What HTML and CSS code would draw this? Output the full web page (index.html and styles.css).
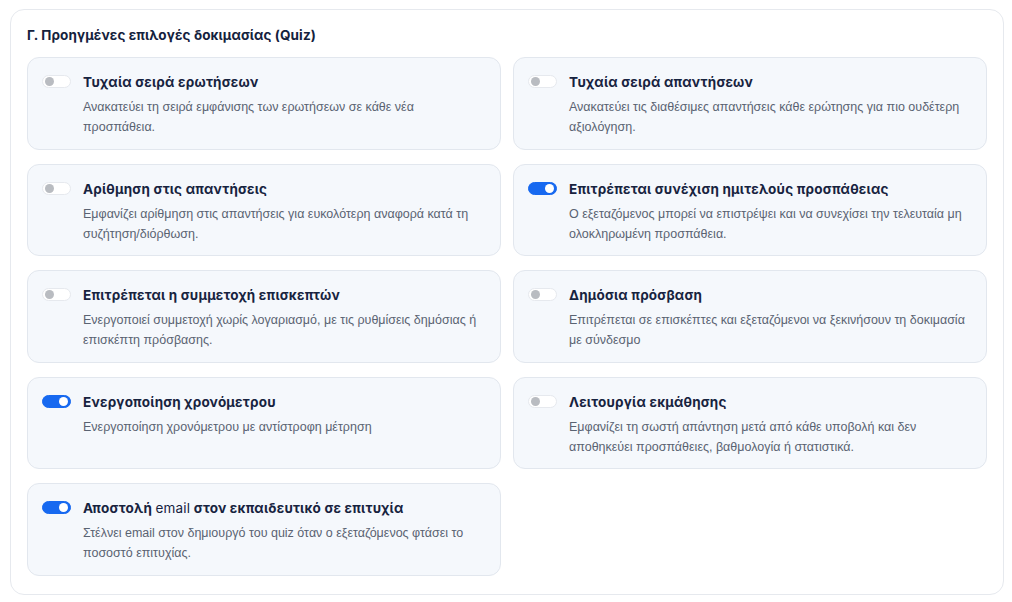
FILE: index.html
```html
<!DOCTYPE html>
<html lang="el">
<head>
<meta charset="utf-8">
<link rel="stylesheet" href="styles.css">
</head>
<body>
<section class="panel">
  <h2 class="heading">Γ. Προηγμένες επιλογές δοκιμασίας (Quiz)</h2>
  <div class="grid">
    <div class="card">
      <span class="toggle"></span>
      <div class="text">
        <div class="title">Τυχαία σειρά ερωτήσεων</div>
        <div class="desc">Ανακατεύει τη σειρά εμφάνισης των ερωτήσεων σε κάθε νέα προσπάθεια.</div>
      </div>
    </div>
    <div class="card">
      <span class="toggle"></span>
      <div class="text">
        <div class="title">Τυχαία σειρά απαντήσεων</div>
        <div class="desc">Ανακατεύει τις διαθέσιμες απαντήσεις κάθε ερώτησης για πιο ουδέτερη αξιολόγηση.</div>
      </div>
    </div>
    <div class="card">
      <span class="toggle"></span>
      <div class="text">
        <div class="title">Αρίθμηση στις απαντήσεις</div>
        <div class="desc">Εμφανίζει αρίθμηση στις απαντήσεις για ευκολότερη αναφορά κατά τη συζήτηση/διόρθωση.</div>
      </div>
    </div>
    <div class="card">
      <span class="toggle on"></span>
      <div class="text">
        <div class="title">Επιτρέπεται συνέχιση ημιτελούς προσπάθειας</div>
        <div class="desc">Ο εξεταζόμενος μπορεί να επιστρέψει και να συνεχίσει την τελευταία μη ολοκληρωμένη προσπάθεια.</div>
      </div>
    </div>
    <div class="card">
      <span class="toggle"></span>
      <div class="text">
        <div class="title">Επιτρέπεται η συμμετοχή επισκεπτών</div>
        <div class="desc">Ενεργοποιεί συμμετοχή χωρίς λογαριασμό, με τις ρυθμίσεις δημόσιας ή επισκέπτη πρόσβασης.</div>
      </div>
    </div>
    <div class="card">
      <span class="toggle"></span>
      <div class="text">
        <div class="title">Δημόσια πρόσβαση</div>
        <div class="desc">Επιτρέπεται σε επισκέπτες και εξεταζόμενοι να ξεκινήσουν τη δοκιμασία με σύνδεσμο</div>
      </div>
    </div>
    <div class="card">
      <span class="toggle on"></span>
      <div class="text">
        <div class="title">Ενεργοποίηση χρονόμετρου</div>
        <div class="desc">Ενεργοποίηση χρονόμετρου με αντίστροφη μέτρηση</div>
      </div>
    </div>
    <div class="card">
      <span class="toggle"></span>
      <div class="text">
        <div class="title">Λειτουργία εκμάθησης</div>
        <div class="desc">Εμφανίζει τη σωστή απάντηση μετά από κάθε υποβολή και δεν αποθηκεύει προσπάθειες, βαθμολογία ή στατιστικά.</div>
      </div>
    </div>
    <div class="card">
      <span class="toggle on"></span>
      <div class="text">
        <div class="title">Αποστολή <span class="latin">email</span> στον εκπαιδευτικό σε επιτυχία</div>
        <div class="desc">Στέλνει email στον δημιουργό του quiz όταν ο εξεταζόμενος φτάσει το ποσοστό επιτυχίας.</div>
      </div>
    </div>
  </div>
</section>
</body>
</html>
```

FILE: styles.css
```css
html, body {
  margin: 0;
  padding: 0;
  background: #ffffff;
}
body {
  padding: 9px 8px 8px 10px;
  font-family: "Liberation Sans", Arial, sans-serif;
}
.panel {
  box-sizing: border-box;
  width: 994px;
  height: 586px;
  border: 1px solid #e6e9ee;
  border-radius: 14px;
  padding: 15px 16px 16px 16px;
  background: #ffffff;
}
.heading {
  margin: 0 0 12px 0;
  font-family: Inter, "Noto Sans", sans-serif;
  font-size: 13.5px;
  line-height: 20px;
  font-weight: 700;
  color: #14213d;
  letter-spacing: 0.1px;
}
.grid {
  display: grid;
  grid-template-columns: 474px 474px;
  column-gap: 12px;
  row-gap: 14px;
  grid-auto-rows: 92.5px;
}
.card {
  box-sizing: border-box;
  display: flex;
  align-items: flex-start;
  gap: 12px;
  padding: 15px 14px 0 14px;
  background: #f5f8fc;
  border: 1px solid #e2e7ee;
  border-radius: 12px;
}
.toggle {
  position: relative;
  flex: none;
  box-sizing: border-box;
  width: 29px;
  height: 13px;
  margin-top: 2px;
  border-radius: 7px;
  background: #ffffff;
  border: 1px solid #e6e9ee;
}
.toggle::after {
  content: "";
  position: absolute;
  top: 1px;
  left: 2px;
  width: 9px;
  height: 9px;
  border-radius: 50%;
  background: #b9bcc1;
}
.toggle.on {
  background: #1769f0;
  border-color: #1769f0;
}
.toggle.on::after {
  left: auto;
  right: 2px;
  background: #ffffff;
}
.title {
  font-family: Inter, "Noto Sans", sans-serif;
  font-size: 13.5px;
  line-height: 18px;
  font-weight: 700;
  color: #17233f;
  letter-spacing: 0.2px;
}
.title .latin {
  font-weight: 400;
}
.desc {
  margin-top: 6px;
  font-size: 12.5px;
  line-height: 20px;
  color: #5a6372;
}
```
